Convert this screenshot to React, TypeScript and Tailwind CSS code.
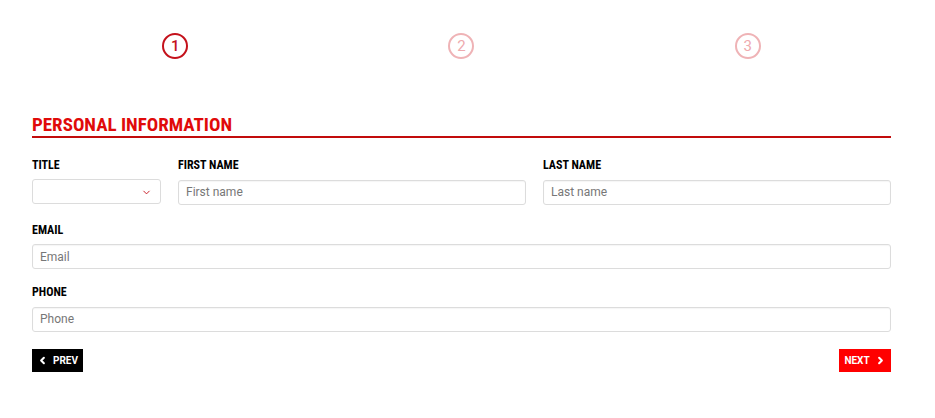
import { ChevronDown, ChevronLeft, ChevronRight } from 'lucide-react';

const COND = "font-['Roboto_Condensed','Liberation_Sans_Narrow','Roboto',sans-serif]";

const STEPS = [1, 2, 3];

function Label({ children }: { children: string }) {
  return (
    <label className={`${COND} block text-[12px] font-bold leading-none uppercase text-black mb-[8px]`}>
      {children}
    </label>
  );
}

function Field({ placeholder }: { placeholder: string }) {
  return (
    <input
      placeholder={placeholder}
      className="w-full h-[25px] border border-[#dcdcdc] rounded-[3px] px-[7px] text-[12px] text-[#333] placeholder-[#777] font-['Roboto',sans-serif] focus:outline-none shadow-[inset_0_1px_1px_rgba(0,0,0,0.04)]"
    />
  );
}

export default function App() {
  return (
    <div className="w-[935px] h-[418px] bg-white font-['Roboto',sans-serif] px-[32px] pt-[33px]">
      <div className="w-[859px]">
        {/* Steps */}
        <div className="grid grid-cols-3">
          {STEPS.map((n) => (
            <div key={n} className="flex justify-center">
              <div
                className={`w-[26px] h-[26px] rounded-full border-2 flex items-center justify-center text-[15px] leading-none ${
                  n === 1 ? 'border-[#c4111b] text-[#c4111b] font-medium' : 'border-[#efb3b6] text-[#eeaaae]'
                }`}
              >
                {n}
              </div>
            </div>
          ))}
        </div>

        {/* Section title */}
        <h2 className={`${COND} mt-[56px] text-[19px] font-bold text-[#e00a0a] leading-none pb-[2px] border-b-2 border-[#c20c0c]`}>
          PERSONAL INFORMATION
        </h2>

        <div className="mt-[21px] grid grid-cols-[129px_1fr_1fr] gap-x-[17px]">
          <div>
            <Label>Title</Label>
            <div className="relative h-[25px] border border-[#dcdcdc] rounded-[3px]">
              <ChevronDown size={11} strokeWidth={2} className="absolute right-[8px] top-[7px] text-[#c4111b]" />
            </div>
          </div>
          <div>
            <Label>First Name</Label>
            <Field placeholder="First name" />
          </div>
          <div>
            <Label>Last Name</Label>
            <Field placeholder="Last name" />
          </div>
        </div>

        <div className="mt-[19px]">
          <Label>Email</Label>
          <Field placeholder="Email" />
        </div>

        <div className="mt-[17px]">
          <Label>Phone</Label>
          <Field placeholder="Phone" />
        </div>

        <div className="mt-[17px] flex justify-between">
          <button className="h-[23px] w-[51px] bg-black text-white text-[10px] font-bold font-['Roboto',sans-serif] flex items-center justify-center gap-[5px]">
            <ChevronLeft size={11} strokeWidth={4.5} />
            PREV
          </button>
          <button className="h-[23px] w-[52px] bg-[#ff0000] text-white text-[10px] font-bold font-['Roboto',sans-serif] flex items-center justify-center gap-[5px]">
            NEXT
            <ChevronRight size={11} strokeWidth={4.5} />
          </button>
        </div>
      </div>
    </div>
  );
}
